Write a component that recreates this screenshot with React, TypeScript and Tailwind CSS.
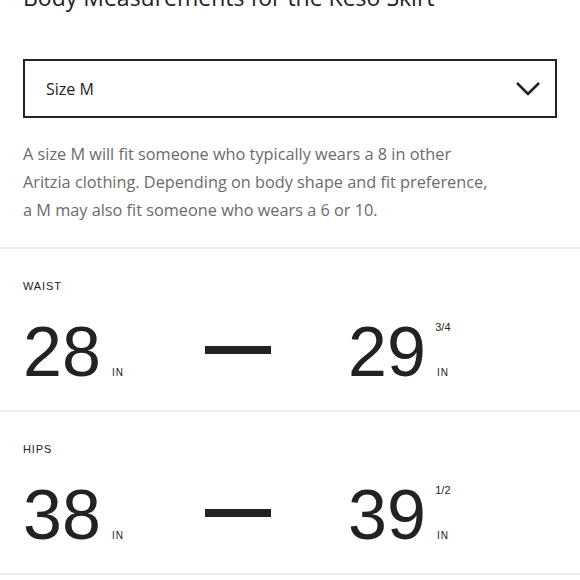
import React from 'react';

type Measure = {
    label: string;
    from: string;
    to: string;
    fraction?: string;
};

const measures: Measure[] = [
    { label: 'WAIST', from: '28', to: '29', fraction: '3/4' },
    { label: 'HIPS', from: '38', to: '39', fraction: '1/2' },
];

const Value: React.FC<{ value: string; fraction?: string }> = ({ value, fraction }) => (
    <div className="flex items-stretch gap-[6px]">
        <span className="text-[70px] leading-[70px] text-[#222]">{value}</span>
        <div className="flex w-[22px] flex-col items-center justify-between pt-[4px] pb-[9px]">
            <span className="text-[11px] leading-[12px] text-[#222]">{fraction ?? ''}</span>
            <span className="text-[10px] leading-[10px] tracking-[0.08em] text-[#222]">IN</span>
        </div>
    </div>
);

const MeasureRow: React.FC<{ m: Measure }> = ({ m }) => (
    <section className="border-b-2 border-[#ececec] px-[23px] pt-[29px] pb-[23px]">
        <h3 className="text-[11px] leading-[16px] tracking-[0.08em] text-[#222]">{m.label}</h3>
        <div className="mt-[23px] flex items-center">
            <div className="w-[182px]">
                <Value value={m.from} />
            </div>
            <div className="mb-[5px] h-[8px] w-[66px] bg-[#222]" />
            <div className="ml-[77px]">
                <Value value={m.to} fraction={m.fraction} />
            </div>
        </div>
    </section>
);

export default function App() {
    return (
        <div className="h-[580px] w-[580px] overflow-hidden bg-white font-['Liberation_Sans',sans-serif]">
            <div className="border-b-2 border-[#ececec] px-[23px] pb-[23px]">
                <h2 className="mt-[-19px] font-['Open_Sans',sans-serif] text-[23px] leading-[32px] text-[#222]">
                    Body Measurements for the Keso Skirt
                </h2>
                <button className="mt-[46px] flex h-[59px] w-full items-center justify-between border-2 border-[#222] pl-[21px] pr-[14px] text-left">
                    <span className="font-['Open_Sans',sans-serif] text-[16px] text-[#222]">Size M</span>
                    <svg width="26" height="16" viewBox="0 0 26 16" fill="none">
                        <polyline points="2,2 13,13 24,2" stroke="#222" strokeWidth="2.6" />
                    </svg>
                </button>
                <p className="mt-[22px] font-['Open_Sans',sans-serif] text-[16.3px] leading-[28px] text-[#6b6b6b]">
                    A size M will fit someone who typically wears a 8 in other
                    <br />
                    Aritzia clothing. Depending on body shape and fit preference,
                    <br />
                    a M may also fit someone who wears a 6 or 10.
                </p>
            </div>
            {measures.map((m) => (
                <MeasureRow key={m.label} m={m} />
            ))}
        </div>
    );
}
